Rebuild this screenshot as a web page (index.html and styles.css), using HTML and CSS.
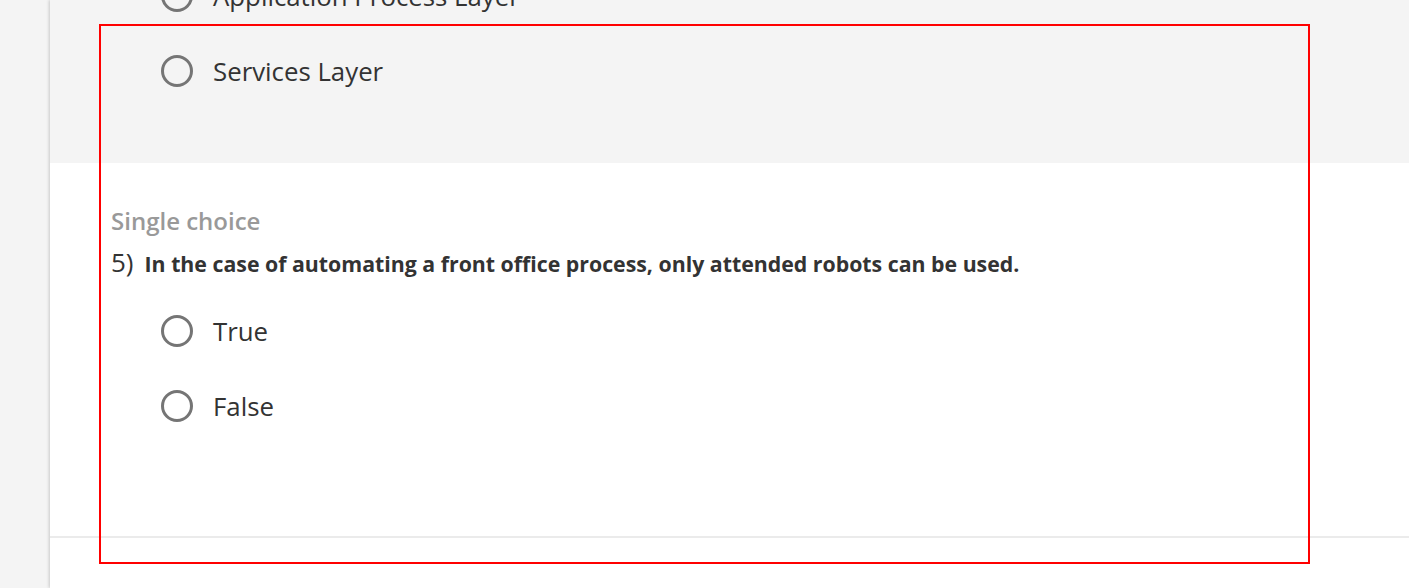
FILE: index.html
```html
<!DOCTYPE html>
<html>
<head>
<meta charset="utf-8">
<link rel="stylesheet" href="styles.css">
</head>
<body>
<div class="page">
  <div class="rail"></div>
  <main class="panel">
    <section class="question answered">
      <ul class="options pulled">
        <li class="option"><span class="radio"></span><span class="label">Application Process Layer</span></li>
        <li class="option"><span class="radio"></span><span class="label">Services Layer</span></li>
      </ul>
    </section>
    <section class="question current">
      <div class="qtype">Single choice</div>
      <div class="qline"><span class="qnum">5)</span><span class="qtext">In the case of automating a front office process, only attended robots can be used.</span></div>
      <ul class="options">
        <li class="option"><span class="radio"></span><span class="label">True</span></li>
        <li class="option"><span class="radio"></span><span class="label">False</span></li>
      </ul>
    </section>
    <section class="question next"></section>
  </main>
  <div class="highlight"></div>
</div>
</body>
</html>
```

FILE: styles.css
```css
html, body {
  margin: 0;
  padding: 0;
  height: 100%;
  overflow: hidden;
}
body {
  font-family: "Open Sans", "Liberation Sans", sans-serif;
  background: #f4f4f4;
  color: #333;
}
.page {
  position: relative;
  display: flex;
  height: 588px;
}
.rail {
  width: 50px;
  flex: none;
  background: #f4f4f4;
}
.panel {
  flex: 1;
  background: #fff;
  box-shadow: -1px 0 3px rgba(0,0,0,0.18);
  display: flex;
  flex-direction: column;
  overflow: hidden;
}
.question {
  padding: 0 0 0 61px;
}
.answered {
  background: #f4f4f4;
  height: 163px;
  flex: none;
}
.options {
  list-style: none;
  margin: 0;
  padding: 0 0 0 50px;
}
.pulled {
  margin-top: -42px;
}
.option {
  height: 75px;
  display: flex;
  align-items: center;
}
.radio {
  width: 26px;
  height: 26px;
  border: 3px solid #757575;
  border-radius: 50%;
  flex: none;
}
.label {
  margin-left: 20px;
  font-size: 25.8px;
  color: #333;
}
.qtype {
  margin-top: 42px;
  font-size: 24px;
  font-weight: 600;
  color: #999;
  line-height: 32px;
}
.qline {
  display: flex;
  align-items: baseline;
  margin-top: 9px;
  line-height: 32px;
}
.qnum {
  font-size: 26px;
  color: #333;
  margin-right: 11px;
}
.qtext {
  font-size: 21.3px;
  font-weight: 700;
  color: #333;
}
.current {
  height: 375px;
  flex: none;
  box-sizing: border-box;
  border-bottom: 2px solid #ebebeb;
  box-shadow: 0 2px 3px rgba(0,0,0,0.05);
}
.current .options {
  margin-top: 13px;
}
.next {
  flex: 1;
  background: #fff;
}
.highlight {
  position: absolute;
  left: 99px;
  top: 24px;
  width: 1207px;
  height: 536px;
  border: 2px solid #ff0000;
  pointer-events: none;
}
```
